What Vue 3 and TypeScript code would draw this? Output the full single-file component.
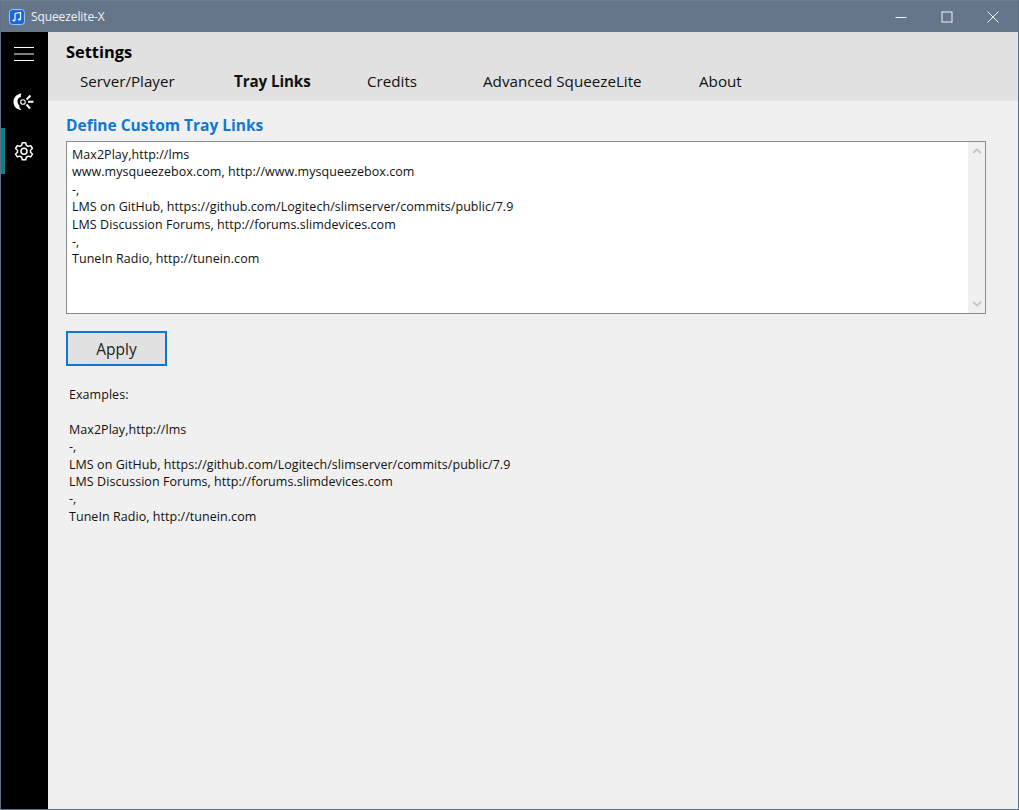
<script setup lang="ts">
const tabs: { label: string; width: number; active?: boolean }[] = [
  { label: 'Server/Player', width: 154 },
  { label: 'Tray Links', width: 133, active: true },
  { label: 'Credits', width: 116 },
  { label: 'Advanced SqueezeLite', width: 216 },
  { label: 'About', width: 60 },
]
const links = `Max2Play,http://lms
www.mysqueezebox.com, http://www.mysqueezebox.com
-,
LMS on GitHub, https://github.com/Logitech/slimserver/commits/public/7.9
LMS Discussion Forums, http://forums.slimdevices.com
-,
TuneIn Radio, http://tunein.com`
const examples = ['Examples:', '', 'Max2Play,http://lms', '-,', 'LMS on GitHub, https://github.com/Logitech/slimserver/commits/public/7.9', 'LMS Discussion Forums, http://forums.slimdevices.com', '-,', 'TuneIn Radio, http://tunein.com']
</script>

<template>
  <div class="window">
    <header class="titlebar">
      <div class="app-icon">
        <svg width="16" height="16" viewBox="0 0 16 16">
          <rect x="0.5" y="0.5" width="15" height="15" rx="3" fill="#1668e0" stroke="#9cc4f5" stroke-width="1" />
          <path d="M6 4.5 L11.5 3.5 V10.5 M6 4.5 V11.5" stroke="#fff" stroke-width="1.2" fill="none" />
          <ellipse cx="4.8" cy="11.5" rx="1.4" ry="1.1" fill="#fff" />
          <ellipse cx="10.3" cy="10.5" rx="1.4" ry="1.1" fill="#fff" />
        </svg>
      </div>
      <span class="app-title">Squeezelite-X</span>
      <div class="controls">
        <button class="ctl"><svg width="12" height="12" viewBox="0 0 12 12"><path d="M0.5 6.5H11.5" stroke="#f0f2f5" /></svg></button>
        <button class="ctl"><svg width="12" height="12" viewBox="0 0 12 12"><rect x="1" y="1" width="10" height="10" fill="none" stroke="#f0f2f5" /></svg></button>
        <button class="ctl"><svg width="12" height="12" viewBox="0 0 12 12"><path d="M0.5 0.5L11.5 11.5M11.5 0.5L0.5 11.5" stroke="#f0f2f5" /></svg></button>
      </div>
    </header>
    <div class="body">
      <nav class="rail">
        <button class="rail-btn menu">
          <svg width="22" height="16" viewBox="0 0 22 16"><path d="M1 1.500H21M1 8H21M1 14.500H21" stroke="#fff" stroke-width="1.200" /></svg>
        </button>
        <button class="rail-btn nowplaying">
          <svg width="24" height="22" viewBox="0 0 24 22">
            <path d="M9.500 2.500 C4.500 3 1.500 6.500 1.500 11 C1.500 15.500 4.500 18.500 9.500 19 C7.500 17 7 15.500 7.500 14.500 C5.500 13 4.800 10 6 8 C6.800 6.800 7.800 6.200 9 6 C8.600 5 8.800 3.500 9.500 2.500Z" fill="#fff" />
            <circle cx="11" cy="11" r="2.300" fill="none" stroke="#fff" stroke-width="1.100" />
            <path d="M14.500 8.500 L18.500 4.500 M16 10.800 H21.500 M14.500 13.500 L18 17.500" stroke="#fff" stroke-width="1.900" fill="none" />
          </svg>
        </button>
        <div class="rail-item-active">
          <span class="indicator"></span>
          <button class="rail-btn gear">
            <svg width="20" height="20" viewBox="0 0 20 20">
              <path d="M8.300 1.800 H11.700 L12.300 4.300 L14.200 5.400 L16.700 4.600 L18.400 7.500 L16.500 9.200 V11.300 L18.400 13 L16.700 15.900 L14.200 15.100 L12.300 16.200 L11.700 18.700 H8.300 L7.700 16.200 L5.800 15.100 L3.300 15.900 L1.600 13 L3.500 11.300 V9.200 L1.600 7.500 L3.300 4.600 L5.800 5.400 L7.700 4.300Z" fill="none" stroke="#fff" stroke-width="1.500" stroke-linejoin="round" />
              <circle cx="10" cy="10.250" r="3" fill="none" stroke="#fff" stroke-width="1.500" />
            </svg>
          </button>
        </div>
      </nav>
      <main class="main">
        <section class="head">
          <h1 class="page-title">Settings</h1>
          <div class="tabs">
            <span v-for="t in tabs" :key="t.label" class="tab" :class="{ active: t.active }" :style="{ width: t.width + 'px' }">{{ t.label }}</span>
          </div>
        </section>
        <section class="content">
          <h2 class="section-title">Define Custom Tray Links</h2>
          <div class="editor">
            <pre class="editor-text">{{ links }}</pre>
            <div class="scrollbar">
              <svg width="10" height="6" viewBox="0 0 10 6"><path d="M1 5L5 1.500L9 5" stroke="#c4c4c4" stroke-width="1.800" fill="none" /></svg>
              <svg width="10" height="6" viewBox="0 0 10 6"><path d="M1 1L5 4.500L9 1" stroke="#c4c4c4" stroke-width="1.800" fill="none" /></svg>
            </div>
          </div>
          <button class="apply">Apply</button>
          <div class="examples">
            <div v-for="(line, i) in examples" :key="i" class="ex-line">{{ line }}</div>
          </div>
        </section>
      </main>
    </div>
  </div>
</template>

<style>
html, body { margin: 0; padding: 0; overflow: hidden; }
</style>

<style scoped>
.window {
  width: 1019px;
  height: 810px;
  box-sizing: border-box;
  border: 1px solid #5f6f83;
  border-top: 1px solid #707e90;
  display: flex;
  flex-direction: column;
  font-family: "Open Sans", "Noto Sans", sans-serif;
  color: #000;
  overflow: hidden;
}
.titlebar {
  height: 31px;
  background: #66768a;
  display: flex;
  align-items: center;
  flex: none;
}
.app-icon { margin-left: 8px; display: flex; width: 16px; height: 16px; }
.app-title { margin-left: 6px; font-size: 12px; color: #eef0f3; letter-spacing: -0.1px; }
.controls { margin-left: auto; display: flex; margin-right: 2px; }
.ctl {
  width: 46px; height: 31px; border: 0; background: none; padding: 0;
  display: flex; align-items: center; justify-content: center;
}
.body { flex: 1; display: flex; min-height: 0; }
.rail { width: 47px; background: #000; display: flex; flex-direction: column; flex: none; }
.rail-btn { border: 0; background: none; padding: 0; display: flex; align-items: center; justify-content: center; width: 45px; }
.menu { height: 44px; }
.nowplaying { height: 52px; }
.rail-item-active { display: flex; height: 46px; }
.indicator { width: 4px; background: #00878a; flex: none; }
.gear { width: 37px; height: 45px; }
.main { flex: 1; display: flex; flex-direction: column; min-width: 0; background: #f0f0f0; }
.head { height: 69px; background: #e1e1e1; flex: none; box-sizing: border-box; padding: 8px 0 0 18px; }
.page-title { margin: 0; font-size: 16.4px; line-height: 24px; font-weight: 700; }
.tabs { display: flex; padding-left: 14px; margin-top: 7px; }
.tab { font-size: 15.2px; line-height: 20px; color: #111; white-space: nowrap; }
.tab.active { font-weight: 700; letter-spacing: -0.1px; }
.content { padding: 14px 0 0 18px; }
.section-title { margin: 0; font-size: 15.5px; line-height: 20px; font-weight: 700; color: #0f78d4; }
.editor {
  margin-top: 6px; width: 920px; height: 173px; box-sizing: border-box;
  border: 1px solid #8a8a8a; background: #fff; display: flex; justify-content: space-between;
}
.editor-text {
  margin: 0; padding: 4px 0 0 5px; font-family: inherit; font-size: 12.5px; line-height: 17.4px; letter-spacing: 0.05px; color: #111;
}
.scrollbar {
  width: 17px; background: #f0f0f0; display: flex; flex-direction: column; justify-content: space-between; align-items: center; padding: 6px 0; box-sizing: border-box;
}
.apply {
  margin-top: 17px; display: block; width: 101px; height: 35px; box-sizing: border-box;
  border: 2px solid #0a78d7; background: #e1e1e1; font-family: inherit; font-size: 15.5px; color: #222; padding: 0;
}
.examples { margin-top: 20px; margin-left: 3px; font-size: 12.5px; line-height: 17.4px; letter-spacing: 0.05px; color: #111; }
.ex-line { min-height: 17.4px; white-space: pre; }
</style>
